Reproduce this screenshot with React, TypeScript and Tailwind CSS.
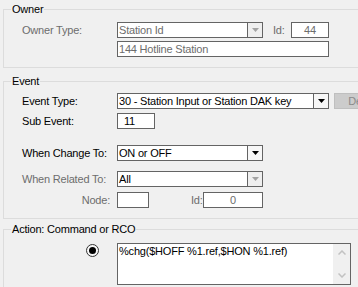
import React from "react";

const GRAY = "text-[#6d6d6d]";

function Tri({ disabled }: { disabled?: boolean }) {
  return (
    <svg width="7" height="4" viewBox="0 0 7 4">
      <polygon points="0,0 7,0 3.5,4" fill={disabled ? "#a3a3a3" : "#000"} />
    </svg>
  );
}

function Combo({ w, text, disabled, dark }: { w: string; text: string; disabled?: boolean; dark?: boolean }) {
  return (
    <div className={`flex h-[16px] border border-[#646464] bg-white ${w}`}>
      <div
        className={`flex-1 pl-[1px] leading-[14px] whitespace-nowrap overflow-hidden ${
          disabled && !dark ? GRAY : "text-black"
        }`}
      >
        {text}
      </div>
      <div
        className={`w-[15px] border-l border-[#646464] flex items-center justify-center ${
          disabled ? "bg-[#efefef]" : "bg-[#f7f7f7]"
        }`}
      >
        <Tri disabled={disabled} />
      </div>
    </div>
  );
}

function Box({ w, text, gray, align }: { w: string; text: string; gray?: boolean; align?: string }) {
  return (
    <div
      className={`h-[16px] border border-[#646464] bg-white leading-[14px] whitespace-nowrap overflow-hidden ${w} ${
        gray ? GRAY : "text-black"
      } ${align ?? "pl-[1px]"}`}
    >
      {text}
    </div>
  );
}

function Group({ title, className, children }: { title: string; className?: string; children: React.ReactNode }) {
  return (
    <fieldset className={`border border-[#dcdcdc] w-[420px] ml-[3px] ${className ?? ""}`}>
      <legend className="ml-[7px] px-[1px] leading-[13px] text-black">{title}</legend>
      {children}
    </fieldset>
  );
}

export default function App() {
  return (
    <div className="w-[358px] h-[287px] overflow-hidden bg-[#f0f0f0] text-[11px] leading-[13px] [font-family:'Liberation_Sans',Arial,sans-serif] tracking-[-0.2px]">
      <div className="flex flex-col">
        <Group title="Owner" className="mt-[3px]">
          <div className="pl-[18px] pt-[6px] pb-[10px] flex flex-col gap-[3px]">
            <div className="flex items-center h-[16px]">
              <div className={`w-[95px] ${GRAY}`}>Owner Type:</div>
              <Combo w="w-[146px]" text="Station Id" disabled />
              <div className={`w-[28px] pl-[10px] ${GRAY}`}>Id:</div>
              <Box w="w-[38px]" text="44" gray align="text-center" />
            </div>
            <div className="flex items-center h-[16px]">
              <div className="w-[95px]" />
              <Box w="w-[212px]" text="144 Hotline Station" gray />
            </div>
          </div>
        </Group>

        <Group title="Event" className="mt-[7px]">
          <div className="pl-[18px] pt-[5px] pb-[10px] flex flex-col">
            <div className="flex items-center h-[16px]">
              <div className="w-[95px] text-black">Event Type:</div>
              <Combo w="w-[212px]" text="30 - Station Input or Station DAK key" />
              <div className="ml-[5px] w-[59px] h-[16px] border border-[#bfbfbf] bg-[#cccccc] text-[#8a8a8a] leading-[14px] text-center">
                Delete
              </div>
            </div>
            <div className="flex items-center h-[16px] mt-[4px]">
              <div className="w-[95px] text-black">Sub Event:</div>
              <Box w="w-[38px]" text="11" align="pl-[6px]" />
            </div>
            <div className="flex items-center h-[16px] mt-[16px]">
              <div className="w-[95px] text-black">When Change To:</div>
              <Combo w="w-[146px]" text="ON or OFF" />
            </div>
            <div className="flex items-center h-[16px] mt-[10px]">
              <div className={`w-[95px] ${GRAY}`}>When Related To:</div>
              <Combo w="w-[146px]" text="All" disabled dark />
            </div>
            <div className="flex items-center h-[16px] mt-[5px]">
              <div className={`w-[95px] pr-[7px] text-right ${GRAY}`}>Node:</div>
              <Box w="w-[32px]" text="" />
              <div className={`w-[54px] pl-[42px] whitespace-nowrap ${GRAY}`}>Id:</div>
              <Box w="w-[60px]" text="0" gray align="text-center" />
            </div>
          </div>
        </Group>

        <Group title="Action: Command or RCO" className="mt-[4px]">
          <div className="pl-[18px] pt-[7px] pb-[10px] flex items-start">
            <div className="w-[95px] flex justify-end pr-[18px] pt-[1px]">
              <svg width="13" height="13" viewBox="0 0 13 13">
                <circle cx="6.5" cy="6.5" r="6" fill="#f7f7f7" stroke="#333333" strokeWidth="1" />
                <circle cx="6.5" cy="6.5" r="3.5" fill="#000" />
              </svg>
            </div>
            <div className="w-[234px] h-[42px] border border-[#646464] bg-white flex">
              <div className="flex-1 pl-[1px] pt-[1px] text-black whitespace-nowrap overflow-hidden">
                %chg($HOFF %1.ref,$HON %1.ref)
              </div>
              <div className="w-[17px] bg-[#f0f0f0] flex flex-col justify-between">
                <div className="h-[17px] flex items-center justify-center">
                  <svg width="8" height="5" viewBox="0 0 8 5">
                    <polyline points="0.5,4.5 4,1 7.5,4.5" fill="none" stroke="#c2c2c2" strokeWidth="1.5" />
                  </svg>
                </div>
                <div className="h-[17px] flex items-center justify-center">
                  <svg width="8" height="5" viewBox="0 0 8 5">
                    <polyline points="0.5,0.5 4,4 7.5,0.5" fill="none" stroke="#c2c2c2" strokeWidth="1.5" />
                  </svg>
                </div>
              </div>
            </div>
          </div>
        </Group>
      </div>
    </div>
  );
}
